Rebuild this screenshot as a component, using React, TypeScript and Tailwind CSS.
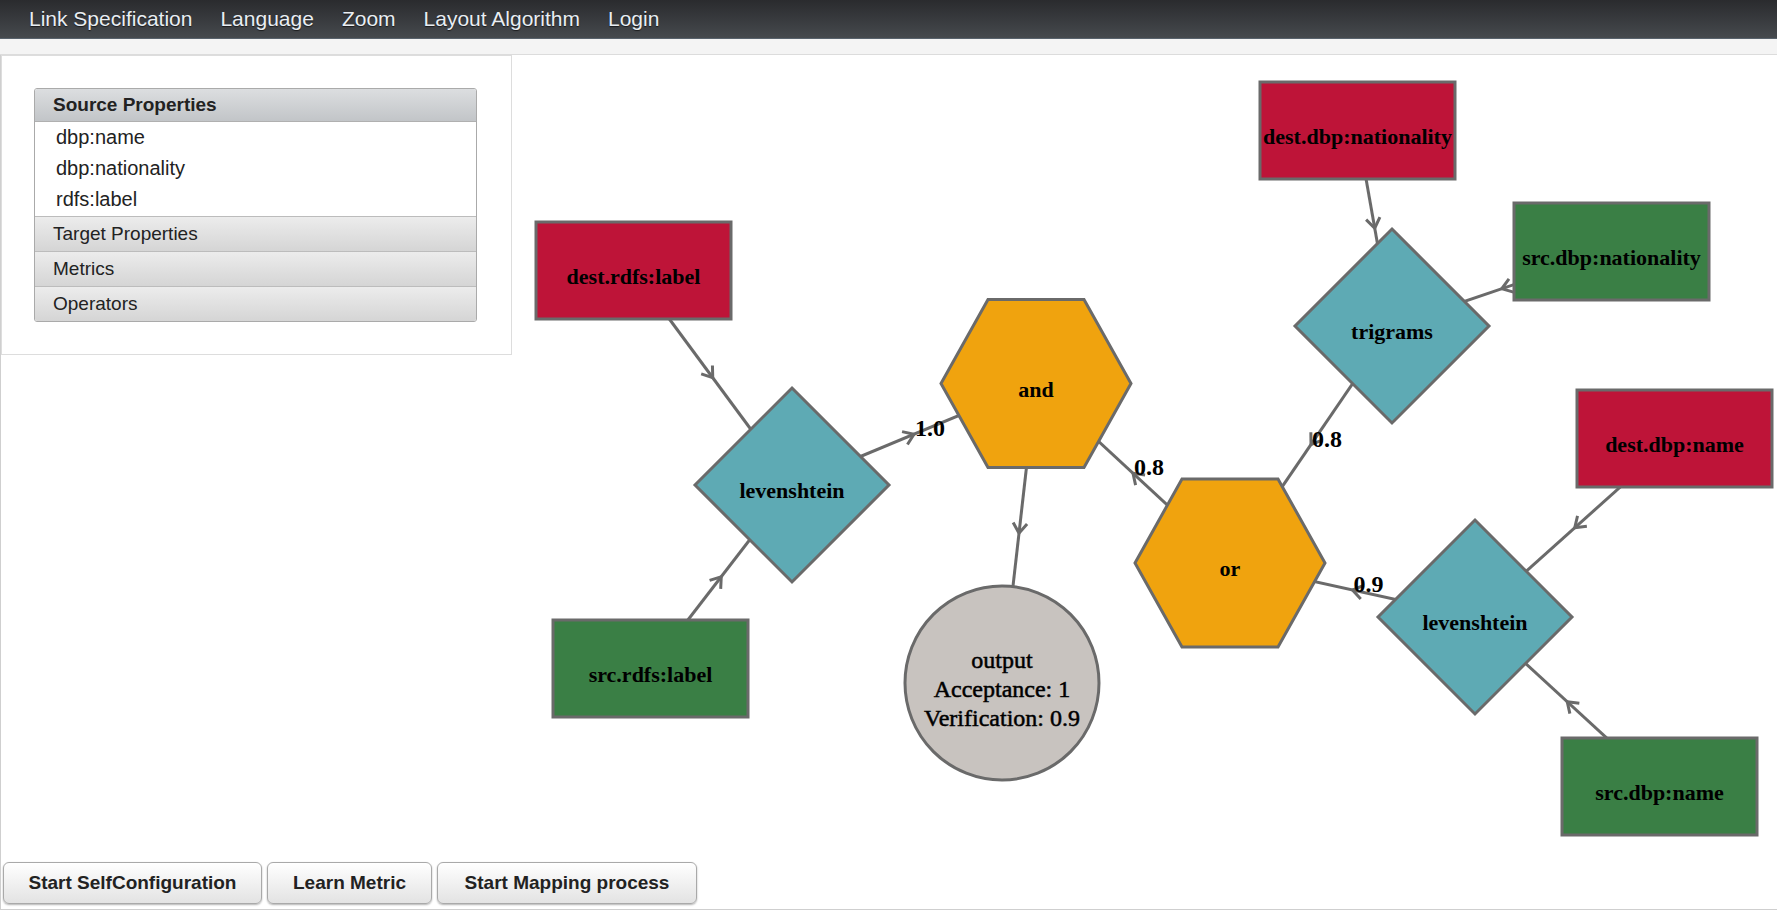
import React from 'react';

// Link specification editor: menu, property accordion, node graph canvas

const STROKE = '#6a6a6a';
const RED = '#be1438';
const GREEN = '#3a7f45';
const TEAL = '#5eaab4';
const ORANGE = '#f0a30e';
const GREY = '#c8c3bf';

const MENU = ['Link Specification', 'Language', 'Zoom', 'Layout Algorithm', 'Login'];

type NodeKind = 'rect' | 'diamond' | 'hex' | 'circle';
interface GraphNode {
  id: string;
  kind: NodeKind;
  cx: number;
  cy: number;
  fill: string;
  lines: string[];
}

// page coordinates; the svg group is shifted back by the canvas offset
const NODES: GraphNode[] = [
  { id: 'destLabel', kind: 'rect', cx: 633.5, cy: 270.5, fill: RED, lines: ['dest.rdfs:label'] },
  { id: 'srcLabel', kind: 'rect', cx: 650.5, cy: 668.5, fill: GREEN, lines: ['src.rdfs:label'] },
  { id: 'destNat', kind: 'rect', cx: 1357.5, cy: 130.5, fill: RED, lines: ['dest.dbp:nationality'] },
  { id: 'srcNat', kind: 'rect', cx: 1611.5, cy: 251.5, fill: GREEN, lines: ['src.dbp:nationality'] },
  { id: 'destName', kind: 'rect', cx: 1674.5, cy: 438.5, fill: RED, lines: ['dest.dbp:name'] },
  { id: 'srcName', kind: 'rect', cx: 1659.5, cy: 786.5, fill: GREEN, lines: ['src.dbp:name'] },
  { id: 'lev1', kind: 'diamond', cx: 792, cy: 485, fill: TEAL, lines: ['levenshtein'] },
  { id: 'tri', kind: 'diamond', cx: 1392, cy: 326, fill: TEAL, lines: ['trigrams'] },
  { id: 'lev2', kind: 'diamond', cx: 1475, cy: 617, fill: TEAL, lines: ['levenshtein'] },
  { id: 'and', kind: 'hex', cx: 1036, cy: 383.5, fill: ORANGE, lines: ['and'] },
  { id: 'or', kind: 'hex', cx: 1230, cy: 563, fill: ORANGE, lines: ['or'] },
  { id: 'out', kind: 'circle', cx: 1002, cy: 683, fill: GREY, lines: ['output', 'Acceptance: 1', 'Verification: 0.9'] },
];

const EDGES: { from: string; to: string; label?: string }[] = [
  { from: 'destLabel', to: 'lev1' },
  { from: 'srcLabel', to: 'lev1' },
  { from: 'lev1', to: 'and', label: '1.0' },
  { from: 'and', to: 'out' },
  { from: 'or', to: 'and', label: '0.8' },
  { from: 'destNat', to: 'tri' },
  { from: 'srcNat', to: 'tri' },
  { from: 'tri', to: 'or', label: '0.8' },
  { from: 'destName', to: 'lev2' },
  { from: 'srcName', to: 'lev2' },
  { from: 'lev2', to: 'or', label: '0.9' },
];

const byId = (id: string) => NODES.find(n => n.id === id)!;

function Shape({ n }: { n: GraphNode }) {
  const common = { fill: n.fill, stroke: STROKE, strokeWidth: 3 };
  if (n.kind === 'rect') {
    return <rect x={n.cx - 97.5} y={n.cy - 48.5} width={195} height={97} {...common} />;
  }
  if (n.kind === 'diamond') {
    const h = 97;
    return (
      <polygon
        points={`${n.cx},${n.cy - h} ${n.cx + h},${n.cy} ${n.cx},${n.cy + h} ${n.cx - h},${n.cy}`}
        {...common}
      />
    );
  }
  if (n.kind === 'hex') {
    const { cx, cy } = n;
    return (
      <polygon
        points={`${cx - 95},${cy} ${cx - 48},${cy - 84} ${cx + 48},${cy - 84} ${cx + 95},${cy} ${cx + 48},${cy + 84} ${cx - 48},${cy + 84}`}
        {...common}
      />
    );
  }
  return <circle cx={n.cx} cy={n.cy} r={97} {...common} />;
}

function Edge({ from, to }: { from: string; to: string; label?: string }) {
  const a = byId(from);
  const b = byId(to);
  const mx = (a.cx + b.cx) / 2;
  const my = (a.cy + b.cy) / 2;
  const len = Math.hypot(b.cx - a.cx, b.cy - a.cy);
  const dx = (b.cx - a.cx) / len;
  const dy = (b.cy - a.cy) / len;
  // chevron: tip at midpoint, arms trailing back
  const bx = mx - dx * 10;
  const by = my - dy * 10;
  const px = -dy * 7;
  const py = dx * 7;
  return (
    <g>
      <line x1={a.cx} y1={a.cy} x2={b.cx} y2={b.cy} stroke={STROKE} strokeWidth={3} />
      <path
        d={`M${bx + px},${by + py} L${mx},${my} L${bx - px},${by - py}`}
        fill="none"
        stroke={STROKE}
        strokeWidth={3}
      />
    </g>
  );
}

function EdgeLabel({ from, to, label }: { from: string; to: string; label?: string }) {
  if (!label) return null;
  const a = byId(from);
  const b = byId(to);
  const mx = (a.cx + b.cx) / 2;
  const my = (a.cy + b.cy) / 2;
  return (
    <text x={mx + 1} y={my + 2} fontSize={24} fontWeight="bold" fill="#000">
      {label}
    </text>
  );
}

function NodeText({ n }: { n: GraphNode }) {
  if (n.kind === 'circle') {
    return (
      <text textAnchor="middle" fontSize={24} fill="#000" stroke="#000" strokeWidth={0.5}>
        {n.lines.map((l, i) => (
          <tspan key={l} x={n.cx} y={n.cy - 15 + i * 29}>
            {l}
          </tspan>
        ))}
      </text>
    );
  }
  return (
    <text x={n.cx} y={n.cy + 13} textAnchor="middle" fontSize={22} fontWeight="bold" fill="#000">
      {n.lines[0]}
    </text>
  );
}

function Graph() {
  return (
    <svg width={1265} height={854} className="block shrink-0" style={{ fontFamily: '"Liberation Serif", "DejaVu Serif", serif' }}>
      <g transform="translate(-512,-55)">
        {EDGES.map(e => (
          <Edge key={e.from + e.to} {...e} />
        ))}
        {NODES.map(n => (
          <Shape key={n.id} n={n} />
        ))}
        {NODES.map(n => (
          <NodeText key={n.id} n={n} />
        ))}
        {EDGES.map(e => (
          <EdgeLabel key={'l' + e.from + e.to} {...e} />
        ))}
      </g>
    </svg>
  );
}

function Accordion() {
  const header =
    'h-[35px] border-t border-[#bcbcbc] bg-linear-to-b from-[#ececec] to-[#d5d5d5] pl-[18px] flex items-center text-[19px] text-[#222]';
  return (
    <div className="w-[443px] rounded-[3px] border border-[#aaaaaa] overflow-hidden">
      <div className="h-[33px] bg-linear-to-b from-[#dcdee0] to-[#c2c5c8] border-b border-[#b0b0b0] pl-[18px] flex items-center font-bold text-[19px] text-[#222]">
        Source Properties
      </div>
      <div className="bg-white pl-[21px] pb-px text-[20px] text-[#222]">
        <div className="leading-[31px]">dbp:name</div>
        <div className="leading-[31px]">dbp:nationality</div>
        <div className="leading-[31px]">rdfs:label</div>
      </div>
      <div className={header}>Target Properties</div>
      <div className={header}>Metrics</div>
      <div className={header}>Operators</div>
    </div>
  );
}

function ActionButton({ label, width }: { label: string; width: string }) {
  return (
    <button
      className={`${width} shrink-0 whitespace-nowrap h-[42px] rounded-[6px] border border-[#a9a9a9] bg-linear-to-b from-white to-[#e3e3e3] shadow-[0_1px_2px_rgba(0,0,0,0.3)] font-bold text-[19px] text-[#222]`}
    >
      {label}
    </button>
  );
}

export default function App() {
  return (
    <div className="w-[1777px] h-[912px] bg-white overflow-hidden" style={{ fontFamily: '"Liberation Sans", Arial, sans-serif' }}>
      {/* Top menu */}
      <nav className="h-[39px] flex items-center gap-[28px] pl-[29px] bg-linear-to-b from-[#2a2b2e] to-[#464a4e] border-b border-[#58626c]">
        {MENU.map(m => (
          <span key={m} className="text-[21px] text-[#e9eef3] [text-shadow:0_1px_1px_rgba(0,0,0,0.6)] cursor-pointer">
            {m}
          </span>
        ))}
      </nav>
      <div className="h-[16px] bg-[#f4f4f4] border-b border-[#dcdcdc]" />

      {/* Main area */}
      <div className="h-[855px] flex border-l border-b border-[#cfcfcf]">
        <div className="w-[511px] shrink-0 flex flex-col justify-between pb-[5px] relative z-10">
          <div className="h-[300px] border border-[#dddddd] p-[32px]">
            <Accordion />
          </div>
          <div className="flex gap-[5px] pl-[2px]">
            <ActionButton label="Start SelfConfiguration" width="w-[259px]" />
            <ActionButton label="Learn Metric" width="w-[165px]" />
            <ActionButton label="Start Mapping process" width="w-[260px]" />
          </div>
        </div>
        <Graph />
      </div>
    </div>
  );
}
